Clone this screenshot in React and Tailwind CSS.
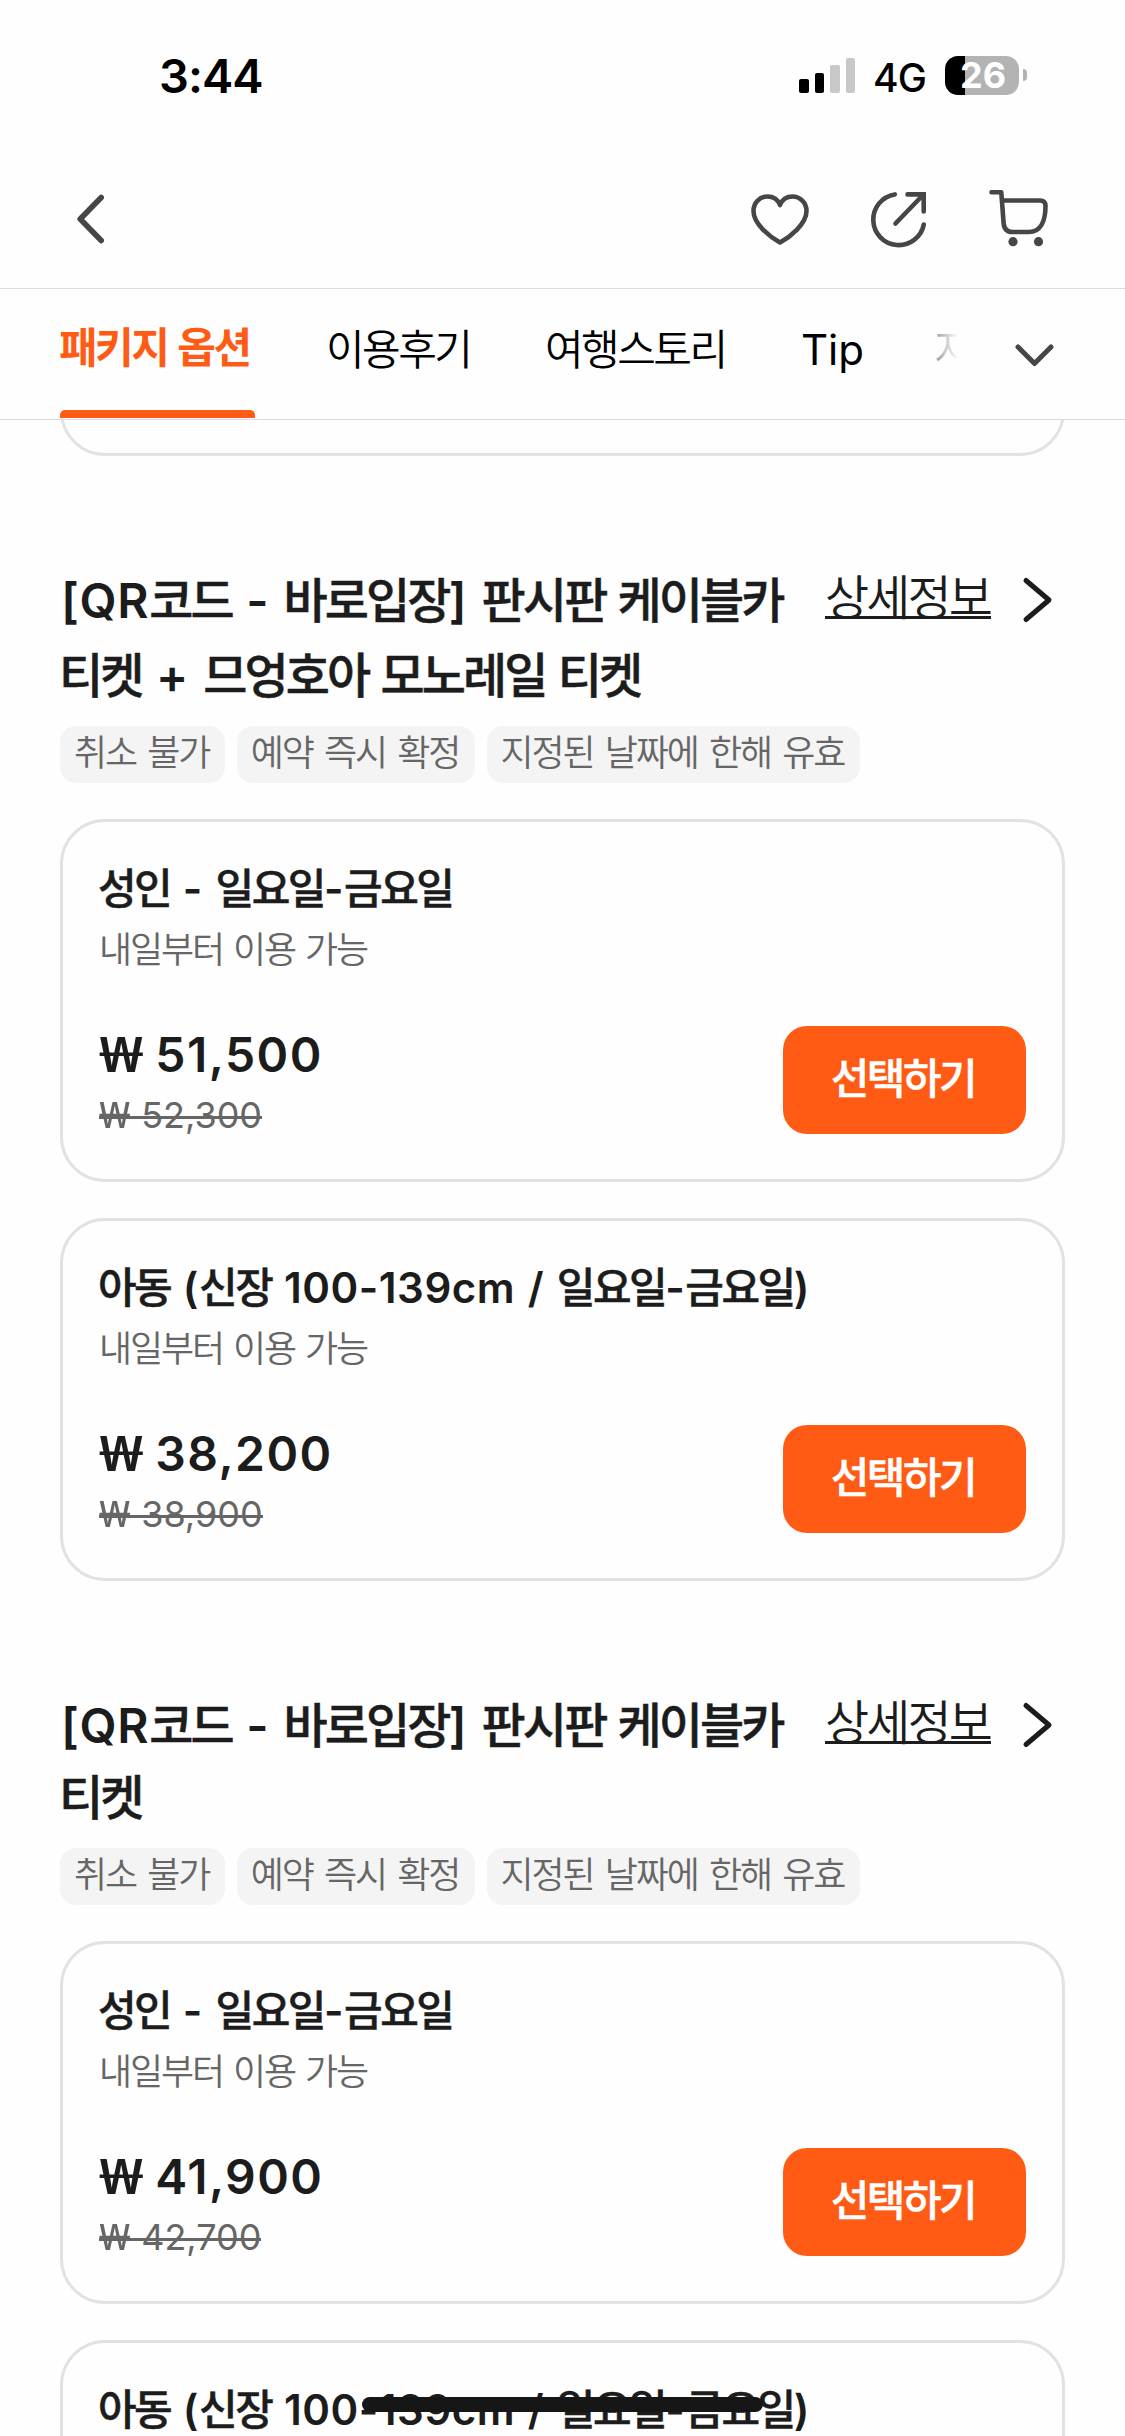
import React from "react";

const HANGUL = /([\u1100-\u11ff\u3130-\u318f\uac00-\ud7a3]+)/;
const SEMI = "font-medium [-webkit-text-stroke:0.5px_currentColor]";

// Hangul runs are set tighter than the Latin runs beside them, with their own weight.
function Text({ children, hangul = "font-[350]" }) {
  return children.split(HANGUL).map((part, i) =>
    HANGUL.test(part) ? (
      <span key={i} className={"tracking-[-0.06em] " + hangul}>
        {part}
      </span>
    ) : part.trim() ? (
      <span key={i} className="tracking-[0.013em] [word-spacing:0.035em]">
        {part}
      </span>
    ) : (
      <React.Fragment key={i}>{part}</React.Fragment>
    )
  );
}

function Won() {
  return <span className="inline-block w-[0.89em] origin-left scale-x-[1.3] font-['Noto_Sans'] tracking-normal">₩</span>;
}

function StatusBar() {
  return (
    <div className="flex h-[150px] items-start">
      <div className="ml-[159px] mt-[46px] w-[640px] text-[47px] font-semibold leading-[60px] tracking-[-0.02em] text-black">
        3:44
      </div>
      <div className="mt-[58px] flex h-[35px] w-[57px] items-end gap-[6px]">
        <i className="h-[14px] w-[9.5px] rounded-[2px] bg-black" />
        <i className="h-[20px] w-[9.5px] rounded-[2px] bg-black" />
        <i className="h-[28px] w-[9.5px] rounded-[2px] bg-[#c8c8c8]" />
        <i className="h-[35px] w-[9.5px] rounded-[2px] bg-[#c8c8c8]" />
      </div>
      <div className="ml-[17px] mt-[53px] w-[72px] text-[39px] font-medium leading-[50px] tracking-[-0.02em] text-black">4G</div>
      <div className="mt-[56px] flex h-[39px] w-[74px] items-center justify-center rounded-[13px] bg-[linear-gradient(90deg,#000_20px,#b3b3b3_20px)] pl-[2px] text-[36px] font-bold leading-[39px] text-white">
        26
      </div>
      <div className="ml-[4px] mt-[69px] h-[12px] w-[4px] rounded-r-full bg-[#b3b3b3]" />
    </div>
  );
}

const iconProps = { fill: "none", stroke: "#464646", strokeWidth: 4.6, strokeLinecap: "round", strokeLinejoin: "round" };

function NavBar() {
  return (
    <div className="flex h-[138px] items-center pb-[1px]">
      <svg {...iconProps} className="ml-[70px]" strokeWidth="5.6" width="44" height="70" viewBox="70 184 44 70">
        <path d="M101.2 197.500L80.200 219L101.200 240.500" />
      </svg>
      <svg {...iconProps} className="ml-[631px]" width="70" height="70" viewBox="745 184 70 70">
        <path d="M780 242.500C770 237 753.500 224 753.500 211C753.500 202.500 760 196.500 767.500 196.500C773.500 196.500 778 200 780 205C782 200 786.500 196.500 792.500 196.500C800 196.500 806.500 202.500 806.500 211C806.500 224 790 237 780 242.500Z" />
      </svg>
      <svg {...iconProps} className="ml-[50px]" width="70" height="70" viewBox="865 184 70 70">
        <path d="M894.800 194.400A25.500 25.500 0 1 0 923.800 224.500" />
        <path d="M907.500 194.400H923.700V211.500" strokeLinejoin="miter" />
        <path d="M922.500 195.500L895.500 223.500" />
      </svg>
      <svg {...iconProps} className="ml-[47px]" width="70" height="70" viewBox="982 184 70 70">
        <path d="M991.500 192.300H1001.300L1003.600 223Q1004.300 232 1012.500 232H1029C1040 232 1045.500 222 1045.500 206Q1045.500 200.500 1040 200.500H1002" />
        <circle cx="1013" cy="241.700" r="4.600" fill="#464646" stroke="none" />
        <circle cx="1038.500" cy="241.700" r="4.600" fill="#464646" stroke="none" />
      </svg>
    </div>
  );
}

function Tabs() {
  return (
    <div className="flex h-[132px] items-start border-y-[1.5px] border-[#dcdcdc] text-[42px] leading-[60px] text-black">
      <div className="ml-[59px] flex h-[129px] w-[196px] flex-col justify-between pt-[29px] font-bold text-[#ff5b14]">
        <div className="whitespace-nowrap">
          <Text hangul="font-bold">패키지 옵션</Text>
        </div>
        <i className="ml-[1px] h-[8px] rounded-t-[5px] bg-[#ff5b14]" />
      </div>
      <div className="ml-[71px] mt-[31px] w-[146px] whitespace-nowrap"><Text>이용후기</Text></div>
      <div className="ml-[73px] mt-[31px] w-[181px] whitespace-nowrap"><Text>여행스토리</Text></div>
      <div className="ml-[75px] mt-[31px] w-[64px]">Tip</div>
      <div className="ml-[69px] mt-[31px] w-[42px] whitespace-nowrap bg-[linear-gradient(90deg,#999_0px,transparent_24px)] bg-clip-text font-[350] text-transparent">지</div>
      <svg className="ml-[34px] mt-[46px]" width="50" height="40" viewBox="1010 334 50 40" fill="none" stroke="#464646" strokeWidth="5" strokeLinecap="round" strokeLinejoin="round">
        <path d="M1018 346L1034.500 362.500L1051 346" />
      </svg>
    </div>
  );
}

function Tag({ children }) {
  return (
    <div className="h-[57px] whitespace-nowrap rounded-[16px] bg-[#f4f4f4] pl-[14px] pr-[15.5px] text-[36px] leading-[54px] text-[#666] [word-spacing:1.2px]">
      <Text>{children}</Text>
    </div>
  );
}

function Card({ title, price, original, struck }) {
  return (
    <div className="flex h-[363px] flex-col rounded-[45px] border-[3px] border-[#e2e2e2] px-[36px] pt-[40px]">
      <div className="relative h-[60px] whitespace-nowrap text-[42px] font-semibold leading-[54px] text-[#1c1c1c]">
        <span className="-ml-px"><Text hangul={SEMI}>{title}</Text></span>
        {struck && <i className="absolute left-[263px] top-[14px] h-[15px] w-[401px] rounded-full bg-[#161616]" />}
      </div>
      {price && (
        <>
          <div className="h-[60px] text-[36px] leading-[56px] text-[#666]">
            <Text>내일부터 이용 가능</Text>
          </div>
          <div className="flex items-start justify-between">
            <div>
              <div className="mt-[42px] h-[60px] whitespace-nowrap text-[48px] font-semibold leading-[60px] tracking-[0.03em] text-[#1c1c1c]">
                <Won /> {price}
              </div>
              <div className="relative mt-[3px] h-[56px] w-max whitespace-nowrap text-[36px] leading-[56px] text-[#666]">
                <Won /> {original}
                <i className="absolute inset-x-0 top-[29px] h-[2.500px] bg-[#666]" />
              </div>
            </div>
            <button className="mt-[44px] h-[108px] w-[243px] rounded-[24px] bg-[#ff5b14] pb-[3px] pr-[3px] text-[42px] leading-[60px] text-white">
              <Text hangul={SEMI}>선택하기</Text>
            </button>
          </div>
        </>
      )}
    </div>
  );
}

function Package({ first, second, cards, short }) {
  return (
    <section className="px-[60px]">
      <div className={short ? "flex h-[163px] items-start pt-[3px]" : "flex h-[163px] items-start"}>
        <h2 className="w-[765px] whitespace-nowrap text-[48px] font-semibold text-[#1c1c1c]">
          <div className="pl-px leading-[75px]"><Text hangul={SEMI}>{first}</Text></div>
          <div className={short ? "-ml-px leading-[69px]" : "-ml-px leading-[75px]"}><Text hangul={SEMI}>{second}</Text></div>
        </h2>
        <a className="mt-[3px] h-[53px] w-[166px] whitespace-nowrap border-b-[3px] border-[#1c1c1c] text-[48px] leading-[63px] text-[#1c1c1c]">
          <Text>상세정보</Text>
        </a>
        <svg className="ml-[27px] mt-[9px]" width="40" height="56" viewBox="1018 572 40 56" fill="none" stroke="#1c1c1c" strokeWidth="5" strokeLinecap="round" strokeLinejoin="round">
          <path d="M1026 580.500L1049 600L1026 619.500" />
        </svg>
      </div>
      <div className="mb-[36px] flex h-[57px] gap-[12px]">
        <Tag>취소 불가</Tag>
        <Tag>예약 즉시 확정</Tag>
        <Tag>지정된 날짜에 한해 유효</Tag>
      </div>
      <div className="flex flex-col gap-[36px]">
        {cards.map((c) => <Card key={c.title} {...c} />)}
      </div>
    </section>
  );
}

export default function App() {
  return (
    <div className="h-[2436px] w-[1125px] overflow-hidden bg-[#fefefe] font-['Inter','Noto_Sans_CJK_KR',sans-serif]">
      <StatusBar />
      <NavBar />
      <Tabs />
      <div className="mx-[60px] mb-[107px] h-[36px] overflow-hidden">
        <div className="mt-[-60px] h-[96px] rounded-[45px] border-[3px] border-[#e2e2e2]" />
      </div>
      <Package
        first="[QR코드 - 바로입장] 판시판 케이블카"
        second="티켓 + 므엉호아 모노레일 티켓"
        cards={[
          { title: "성인 - 일요일-금요일", price: "51,500", original: "52,300" },
          { title: "아동 (신장 100-139cm / 일요일-금요일)", price: "38,200", original: "38,900" },
        ]}
      />
      <div className="h-[104px]" />
      <Package
        short
        first="[QR코드 - 바로입장] 판시판 케이블카"
        second="티켓"
        cards={[
          { title: "성인 - 일요일-금요일", price: "41,900", original: "42,700" },
          { title: "아동 (신장 100-139cm / 일요일-금요일)", struck: true },
        ]}
      />
    </div>
  );
}
